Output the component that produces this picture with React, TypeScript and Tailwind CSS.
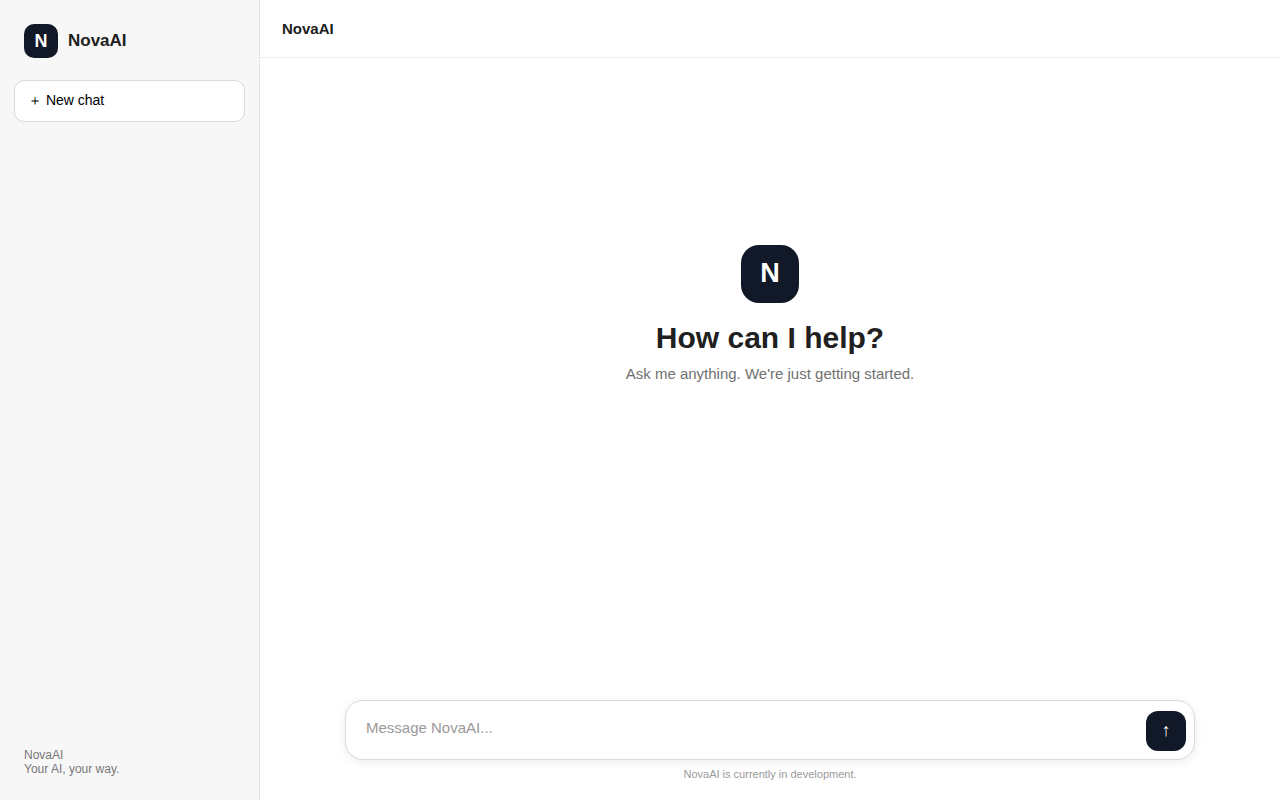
import { useState } from "react";

export default function App() {
  const [message, setMessage] = useState("");

  return (
    <div className="flex h-screen bg-white font-['Liberation_Sans',Arial,sans-serif] text-[#202020]">
      <aside className="flex w-[260px] shrink-0 flex-col border-r border-[#e5e5e5] bg-[#f7f7f7] px-[14px] py-6">
        <div className="flex items-center gap-[10px] px-[10px]">
          <div className="flex size-[34px] items-center justify-center rounded-[10px] bg-[#111827] text-lg font-bold text-white">
            N
          </div>
          <span className="text-[17px] font-bold">NovaAI</span>
        </div>

        <button
          type="button"
          onClick={() => setMessage("")}
          className="mt-[22px] h-[42px] rounded-[10px] border border-[#d9d9d9] bg-white px-[13px] pb-[2px] text-left text-sm text-black hover:bg-gray-50"
        >
          ＋ New chat
        </button>

        <div className="mt-auto px-[10px] text-xs leading-[14px] text-[#777777]">
          NovaAI
          <br />
          Your AI, your way.
        </div>
      </aside>

      <main className="flex min-w-0 flex-1 flex-col">
        <header className="flex h-[58px] shrink-0 items-center border-b border-[#eeeeee] px-[22px] text-[15px] leading-[17px] font-bold">
          NovaAI
        </header>

        <section className="flex flex-1 flex-col items-center justify-center px-5 pb-[132px] text-center">
          <div className="flex size-[58px] items-center justify-center rounded-[18px] bg-[#111827] text-[27px] font-bold text-white">
            N
          </div>
          <h1 className="mt-[18px] text-[30px] leading-[34px] font-bold">How can I help?</h1>
          <p className="mt-[10px] text-[15px] leading-[17px] text-[#707070]">
            Ask me anything. We're just getting started.
          </p>
        </section>

        <div className="px-5 pb-5">
          <form
            onSubmit={(e) => e.preventDefault()}
            className="mx-auto flex h-[60px] max-w-[850px] items-end rounded-[18px] border border-[#d9d9d9] bg-white pr-2 pb-2 pl-5 shadow-[0_2px_10px_rgba(0,0,0,0.08)]"
          >
            <textarea
              rows={1}
              aria-label="Message NovaAI"
              placeholder="Message NovaAI..."
              value={message}
              onChange={(e) => setMessage(e.target.value)}
              className="mb-[14px] h-[18px] flex-1 resize-none overflow-hidden bg-transparent text-[15px] leading-[18px] outline-none placeholder:text-[#999999]"
            />
            <button
              type="submit"
              aria-label="Send"
              className="size-10 rounded-xl bg-[#111827] pb-[2px] text-lg text-white hover:bg-gray-700"
            >
              ↑
            </button>
          </form>
          <p className="mt-2 text-center text-[11px] leading-3 text-[#999999]">
            NovaAI is currently in development.
          </p>
        </div>
      </main>
    </div>
  );
}
